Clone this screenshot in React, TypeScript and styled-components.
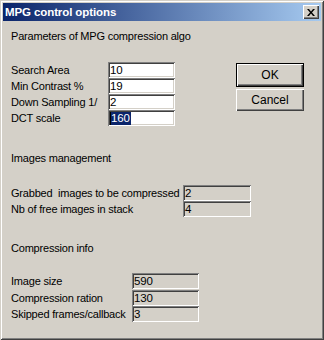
import React from "react";
import styled, { createGlobalStyle } from "styled-components";

const GlobalStyle = createGlobalStyle`
  html, body { margin: 0; padding: 0; background: #d4d0c8; }
  body { font-family: "Liberation Sans", Arial, sans-serif; }
`;

const Window = styled.div`
  width: 324px;
  height: 340px;
  box-sizing: border-box;
  padding: 3px;
  background: #d4d0c8;
  display: flex;
  flex-direction: column;
  box-shadow: inset 1px 1px #d4d0c8, inset -1px -1px #404040,
    inset 2px 2px #ffffff, inset -2px -2px #808080;
`;

const TitleBar = styled.div`
  height: 18px;
  display: flex;
  align-items: center;
  justify-content: space-between;
  padding: 0 2px 0 2px;
  background: linear-gradient(to right, #0a246a, #a6caf0);
`;

const Title = styled.span`
  color: #ffffff;
  font-weight: bold;
  font-size: 11.5px;
  letter-spacing: -0.1px;
`;

const CloseButton = styled.div`
  width: 16px;
  height: 14px;
  box-sizing: border-box;
  background: #d4d0c8;
  display: flex;
  align-items: center;
  justify-content: center;
  box-shadow: inset 1px 1px #ffffff, inset -1px -1px #404040,
    inset -2px -2px #808080;
`;

const Content = styled.div`
  flex: 1;
  display: flex;
  flex-direction: column;
  padding-left: 8px;
  font-size: 11px;
  letter-spacing: -0.2px;
  color: #000;
`;

const Heading = styled.div<{ $gap: number }>`
  margin-top: ${(p) => p.$gap}px;
  height: 14px;
  line-height: 14px;
`;

const TopRow = styled.div`
  display: flex;
  align-items: flex-start;
  margin-top: 19px;
`;

const FieldGrid = styled.div<{ $label: number; $field: number; $gap: number; $row: number }>`
  display: grid;
  grid-template-columns: ${(p) => p.$label}px ${(p) => p.$field}px;
  grid-auto-rows: ${(p) => p.$row}px;
  align-items: center;
  margin-top: ${(p) => p.$gap}px;
`;

const Label = styled.span`
  white-space: pre;
  line-height: 14px;
`;

const Field = styled.div<{ $readonly?: boolean }>`
  height: 16px;
  box-sizing: border-box;
  padding: 2px 0 0 2px;
  line-height: 13px;
  font-size: 11.5px;
  background: ${(p) => (p.$readonly ? "#d4d0c8" : "#ffffff")};
  box-shadow: inset 1px 1px #808080, inset -1px -1px #ffffff,
    inset 2px 2px #404040, inset -2px -2px #d4d0c8;
  display: flex;
  align-items: flex-start;
`;

const Selected = styled.span`
  background: #0a246a;
  color: #ffffff;
  border-left: 1px solid #000;
  padding-right: 1px;
`;

const ButtonColumn = styled.div`
  margin-left: auto;
  margin-right: 17px;
  margin-top: 1px;
  display: flex;
  flex-direction: column;
  gap: 2px;
`;

const Button = styled.div<{ $default?: boolean }>`
  width: 68px;
  height: ${(p) => (p.$default ? 24 : 22)}px;
  box-sizing: border-box;
  display: flex;
  align-items: center;
  justify-content: center;
  font-size: 12px;
  letter-spacing: 0;
  background: #d4d0c8;
  border: ${(p) => (p.$default ? "1px solid #000" : "none")};
  box-shadow: inset 1px 1px #ffffff, inset -1px -1px #404040,
    inset -2px -2px #808080;
`;

const params = [
  { label: "Search Area", value: "10" },
  { label: "Min Contrast %", value: "19" },
  { label: "Down Sampling 1/", value: "2" },
];

const images = [
  { label: "Grabbed  images to be compressed", value: "2" },
  { label: "Nb of free images in stack", value: "4" },
];

const compression = [
  { label: "Image size", value: "590" },
  { label: "Compression ration", value: "130" },
  { label: "Skipped frames/callback", value: "3" },
];

export default function App() {
  return (
    <>
      <GlobalStyle />
      <Window>
        <TitleBar>
          <Title>MPG control options</Title>
          <CloseButton>
            <svg width="8" height="7" viewBox="0 0 8 7">
              <path d="M0 0h2l2 2.5L6 0h2L5 3.5 8 7H6L4 4.5 2 7H0l3-3.5z" fill="#000" />
            </svg>
          </CloseButton>
        </TitleBar>
        <Content>
          <Heading $gap={8}>Parameters of MPG compression algo</Heading>
          <TopRow>
            <FieldGrid $label={97} $field={67} $gap={0} $row={16}>
              {params.map((p) => (
                <React.Fragment key={p.label}>
                  <Label>{p.label}</Label>
                  <Field>{p.value}</Field>
                </React.Fragment>
              ))}
              <Label>DCT scale</Label>
              <Field>
                <Selected>160</Selected>
              </Field>
            </FieldGrid>
            <ButtonColumn>
              <Button $default>OK</Button>
              <Button>Cancel</Button>
            </ButtonColumn>
          </TopRow>
          <Heading $gap={25}>Images management</Heading>
          <FieldGrid $label={172} $field={68} $gap={20} $row={16}>
            {images.map((p) => (
              <React.Fragment key={p.label}>
                <Label>{p.label}</Label>
                <Field $readonly>{p.value}</Field>
              </React.Fragment>
            ))}
          </FieldGrid>
          <Heading $gap={24}>Compression info</Heading>
          <FieldGrid $label={121} $field={67} $gap={18} $row={16.5}>
            {compression.map((p) => (
              <React.Fragment key={p.label}>
                <Label>{p.label}</Label>
                <Field $readonly>{p.value}</Field>
              </React.Fragment>
            ))}
          </FieldGrid>
        </Content>
      </Window>
    </>
  );
}
